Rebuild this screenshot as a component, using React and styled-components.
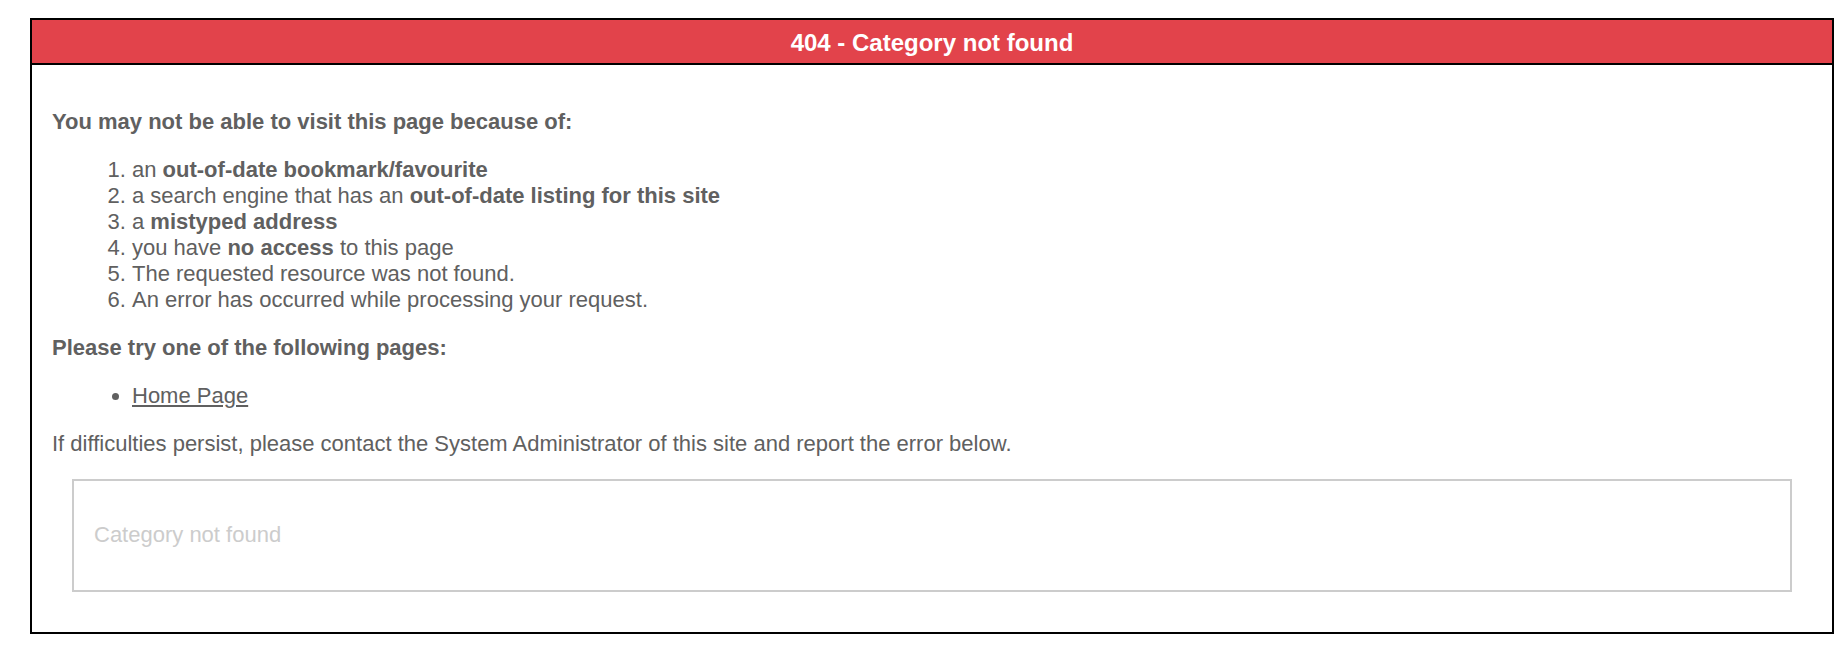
import React from 'react'
import styled, { createGlobalStyle } from 'styled-components'

const GlobalStyle = createGlobalStyle`
    body {
        margin: 0;
        background: #ffffff;
        font-family: "Liberation Sans", Arial, sans-serif;
    }
`

const reasons = [
    ['an ', 'out-of-date bookmark/favourite', ''],
    ['a search engine that has an ', 'out-of-date listing for this site', ''],
    ['a ', 'mistyped address', ''],
    ['you have ', 'no access', ' to this page'],
    ['The requested resource was not found.', '', ''],
    ['An error has occurred while processing your request.', '', ''],
]

function App() {
    return (
        <>
            <GlobalStyle />
            <Page>
                <ErrorBox>
                    <Header>404 - Category not found</Header>
                    <Content>
                        <Lead>You may not be able to visit this page because of:</Lead>
                        <ReasonList>
                            {reasons.map(([before, strong, after], i) => (
                                <li key={i}>
                                    {before}
                                    {strong && <strong>{strong}</strong>}
                                    {after}
                                </li>
                            ))}
                        </ReasonList>
                        <Lead>Please try one of the following pages:</Lead>
                        <LinkList>
                            <li><a href="#">Home Page</a></li>
                        </LinkList>
                        <Note>If difficulties persist, please contact the System Administrator of this site and report the error below.</Note>
                        <ErrorDetail>Category not found</ErrorDetail>
                    </Content>
                </ErrorBox>
            </Page>
        </>
    )
}

const Page = styled.div`
    padding: 18px 12px 0 30px;
`

const ErrorBox = styled.div`
    border: 2px solid #000000;
    background: #ffffff;
`

const Header = styled.h1`
    margin: 0;
    height: 43px;
    padding-top: 2px;
    box-sizing: border-box;
    display: flex;
    align-items: center;
    justify-content: center;
    background-color: #e2434b;
    border-bottom: 2px solid #000000;
    color: #ffffff;
    font-size: 24px;
    font-weight: 700;
    line-height: 27px;
    box-sizing: content-box;
    height: 41px;
`

const Content = styled.div`
    padding: 22px 20px 20px;
    color: #606060;
    font-size: 22px;
    line-height: 26px;
`

const Lead = styled.p`
    margin: 22px 0;
    font-weight: 700;
`

const ReasonList = styled.ol`
    margin: 22px 0;
    padding-left: 80px;

    strong {
        font-weight: 700;
    }
`

const LinkList = styled.ul`
    margin: 22px 0;
    padding-left: 80px;

    a {
        color: #606060;
        text-decoration: underline;
    }
`

const Note = styled.p`
    margin: 22px 0;
`

const ErrorDetail = styled.div`
    margin: 22px 20px 20px;
    padding: 41px 20px 42px;
    border: 2px solid #cccccc;
    color: #cccccc;
`

export default App
